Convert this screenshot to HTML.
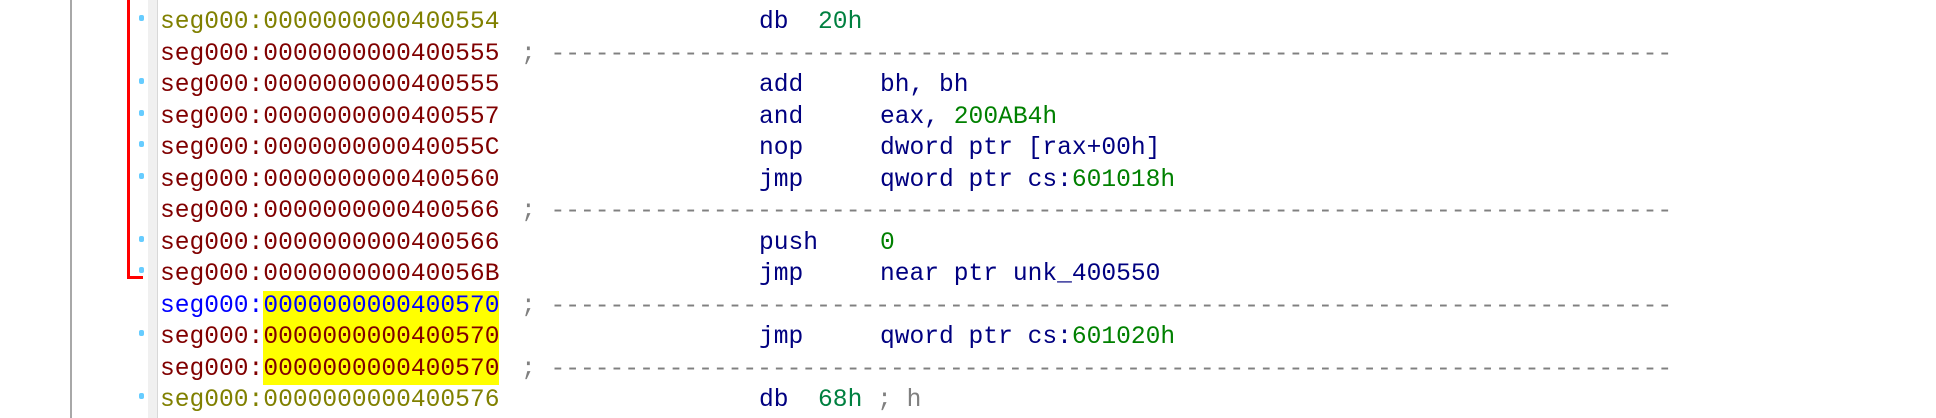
<!DOCTYPE html>
<html><head><style>
body{margin:0;width:1936px;height:418px;background:#fff;position:relative;overflow:hidden;font-family:"Liberation Mono",monospace;font-size:24.6px}
.vl{position:absolute;left:70px;top:0;width:2px;height:418px;background:#a8a8a8}
.strip{position:absolute;left:148px;top:0;width:9px;height:418px;background:#f0f0f0;border-right:1px solid #d8d8d8}
.red{position:absolute;left:127px;top:0;width:3px;height:279px;background:#f00}
.redh{position:absolute;left:127px;top:276px;width:16px;height:3px;background:#f00}
.row{position:absolute;left:0;height:31.5px;line-height:31.5px;white-space:pre;width:1936px}
.row span{position:absolute;top:0}
.a{left:160px}
.m{left:759px;color:#000080}
.o{left:880px;color:#000080}
.c{left:521px;color:#808080}
.dot{position:absolute;left:139px;width:5px;height:6px;border-radius:2px;background:#66ccff;top:8px}
.ol{color:#808000}.dr{color:#800000}.bl{color:#0000ff}.g{color:#008000}
.hl{background:#ffff00;display:inline-block;height:31.5px;vertical-align:top}
</style></head><body>
<div class="vl"></div><div class="strip"></div><div class="red"></div><div class="redh"></div>

<div class="row" style="top:7px"><i class="dot"></i><span class="a ol">seg000:0000000000400554</span><span class="m">db  <b style="font-weight:normal;color:#008040">20h</b></span></div>
<div class="row" style="top:38.5px"><span class="a dr">seg000:0000000000400555</span><span class="c">; ----------------------------------------------------------------------------</span></div>
<div class="row" style="top:70px"><i class="dot"></i><span class="a dr">seg000:0000000000400555</span><span class="m">add</span><span class="o">bh, bh</span></div>
<div class="row" style="top:101.5px"><i class="dot"></i><span class="a dr">seg000:0000000000400557</span><span class="m">and</span><span class="o">eax, <b style="font-weight:normal" class="g">200AB4h</b></span></div>
<div class="row" style="top:133px"><i class="dot"></i><span class="a dr">seg000:000000000040055C</span><span class="m">nop</span><span class="o">dword ptr [rax+00h]</span></div>
<div class="row" style="top:164.5px"><i class="dot"></i><span class="a dr">seg000:0000000000400560</span><span class="m">jmp</span><span class="o">qword ptr cs:<b style="font-weight:normal" class="g">601018h</b></span></div>
<div class="row" style="top:196px"><span class="a dr">seg000:0000000000400566</span><span class="c">; ----------------------------------------------------------------------------</span></div>
<div class="row" style="top:227.5px"><i class="dot"></i><span class="a dr">seg000:0000000000400566</span><span class="m">push</span><span class="o g">0</span></div>
<div class="row" style="top:259px"><i class="dot"></i><span class="a dr">seg000:000000000040056B</span><span class="m">jmp</span><span class="o">near ptr unk_400550</span></div>
<div class="row" style="top:290.5px"><span class="a bl">seg000:<b style="font-weight:normal" class="hl">0000000000400570</b></span><span class="c">; ----------------------------------------------------------------------------</span></div>
<div class="row" style="top:322px"><i class="dot"></i><span class="a dr">seg000:<b style="font-weight:normal" class="hl">0000000000400570</b></span><span class="m">jmp</span><span class="o">qword ptr cs:<b style="font-weight:normal" class="g">601020h</b></span></div>
<div class="row" style="top:353.5px"><span class="a dr">seg000:<b style="font-weight:normal" class="hl">0000000000400570</b></span><span class="c">; ----------------------------------------------------------------------------</span></div>
<div class="row" style="top:385px"><i class="dot"></i><span class="a ol">seg000:0000000000400576</span><span class="m">db  <b style="font-weight:normal;color:#008040">68h</b><b style="font-weight:normal;color:#808080"> ; h</b></span></div>
</body></html>
